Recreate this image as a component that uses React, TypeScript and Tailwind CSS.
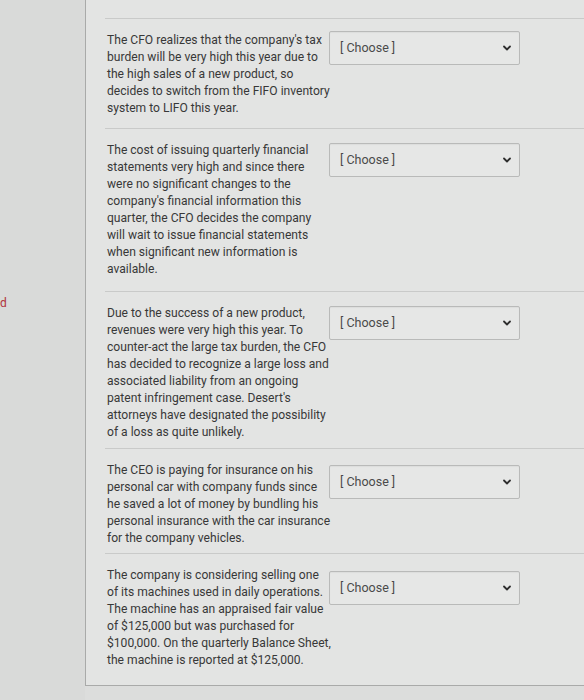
import { ChevronDown } from "lucide-react";

interface Statement {
  lines: string[];
  height: string;
  selectTop: string;
}

const statements: Statement[] = [
  {
    lines: [
      "The CFO realizes that the company's tax",
      "burden will be very high this year due to",
      "the high sales of a new product, so",
      "decides to switch from the FIFO inventory",
      "system to LIFO this year.",
    ],
    height: "h-[110px]",
    selectTop: "mt-[12px]",
  },
  {
    lines: [
      "The cost of issuing quarterly financial",
      "statements very high and since there",
      "were no significant changes to the",
      "company's financial information this",
      "quarter, the CFO decides the company",
      "will wait to issue financial statements",
      "when significant new information is",
      "available.",
    ],
    height: "h-[163px]",
    selectTop: "mt-[14px]",
  },
  {
    lines: [
      "Due to the success of a new product,",
      "revenues were very high this year. To",
      "counter-act the large tax burden, the CFO",
      "has decided to recognize a large loss and",
      "associated liability from an ongoing",
      "patent infringement case. Desert's",
      "attorneys have designated the possibility",
      "of a loss as quite unlikely.",
    ],
    height: "h-[157px]",
    selectTop: "mt-[14px]",
  },
  {
    lines: [
      "The CEO is paying for insurance on his",
      "personal car with company funds since",
      "he saved a lot of money by bundling his",
      "personal insurance with the car insurance",
      "for the company vehicles.",
    ],
    height: "h-[105px]",
    selectTop: "mt-[16px]",
  },
  {
    lines: [
      "The company is considering selling one",
      "of its machines used in daily operations.",
      "The machine has an appraised fair value",
      "of $125,000 but was purchased for",
      "$100,000. On the quarterly Balance Sheet,",
      "the machine is reported at $125,000.",
    ],
    height: "h-[132px]",
    selectTop: "mt-[17px]",
  },
];

function ChooseSelect({ className }: { className: string }) {
  return (
    <div
      className={`${className} flex h-[34px] w-[191px] items-center justify-between rounded-[2px] border border-[#b9bab9] bg-[#e6e7e6] pl-[10px] pr-[6px] shadow-[inset_0_1px_1px_rgba(0,0,0,0.04)]`}
    >
      <span className="text-[12.5px] text-[#4a4a4a]">[ Choose ]</span>
      <ChevronDown className="h-[12px] w-[12px] text-[#2e2e2e]" strokeWidth={3.6} />
    </div>
  );
}

export default function App() {
  return (
    <div
      className="flex h-[700px] w-[584px] overflow-hidden bg-[#dcdddc]"
      style={{ fontFamily: "Roboto, 'Liberation Sans', sans-serif" }}
    >
      {/* Left gutter */}
      <div className="relative h-full w-[85px] shrink-0 bg-[#d9dad9]">
        <span className="absolute left-0 top-[297px] text-[12px] leading-none text-[#b0323c]">
          d
        </span>
      </div>

      {/* Question panel */}
      <div className="flex h-[686px] flex-1 flex-col border-b border-l border-[#a9aaa9] bg-[#e3e4e3]">
        <div className="ml-[19px] mt-[18px] flex flex-col">
          {statements.map((s, i) => (
            <div
              key={i}
              className={`${s.height} flex border-t border-[#c9cac9] pl-[2px]`}
            >
              <div className="w-[222px] shrink-0 pt-[13px] text-[12.1px] leading-[17px] text-[#383838]">
                {s.lines.map((line, j) => (
                  <div key={j} className="whitespace-nowrap">
                    {line}
                  </div>
                ))}
              </div>
              <ChooseSelect className={s.selectTop} />
            </div>
          ))}
        </div>
      </div>
    </div>
  );
}
